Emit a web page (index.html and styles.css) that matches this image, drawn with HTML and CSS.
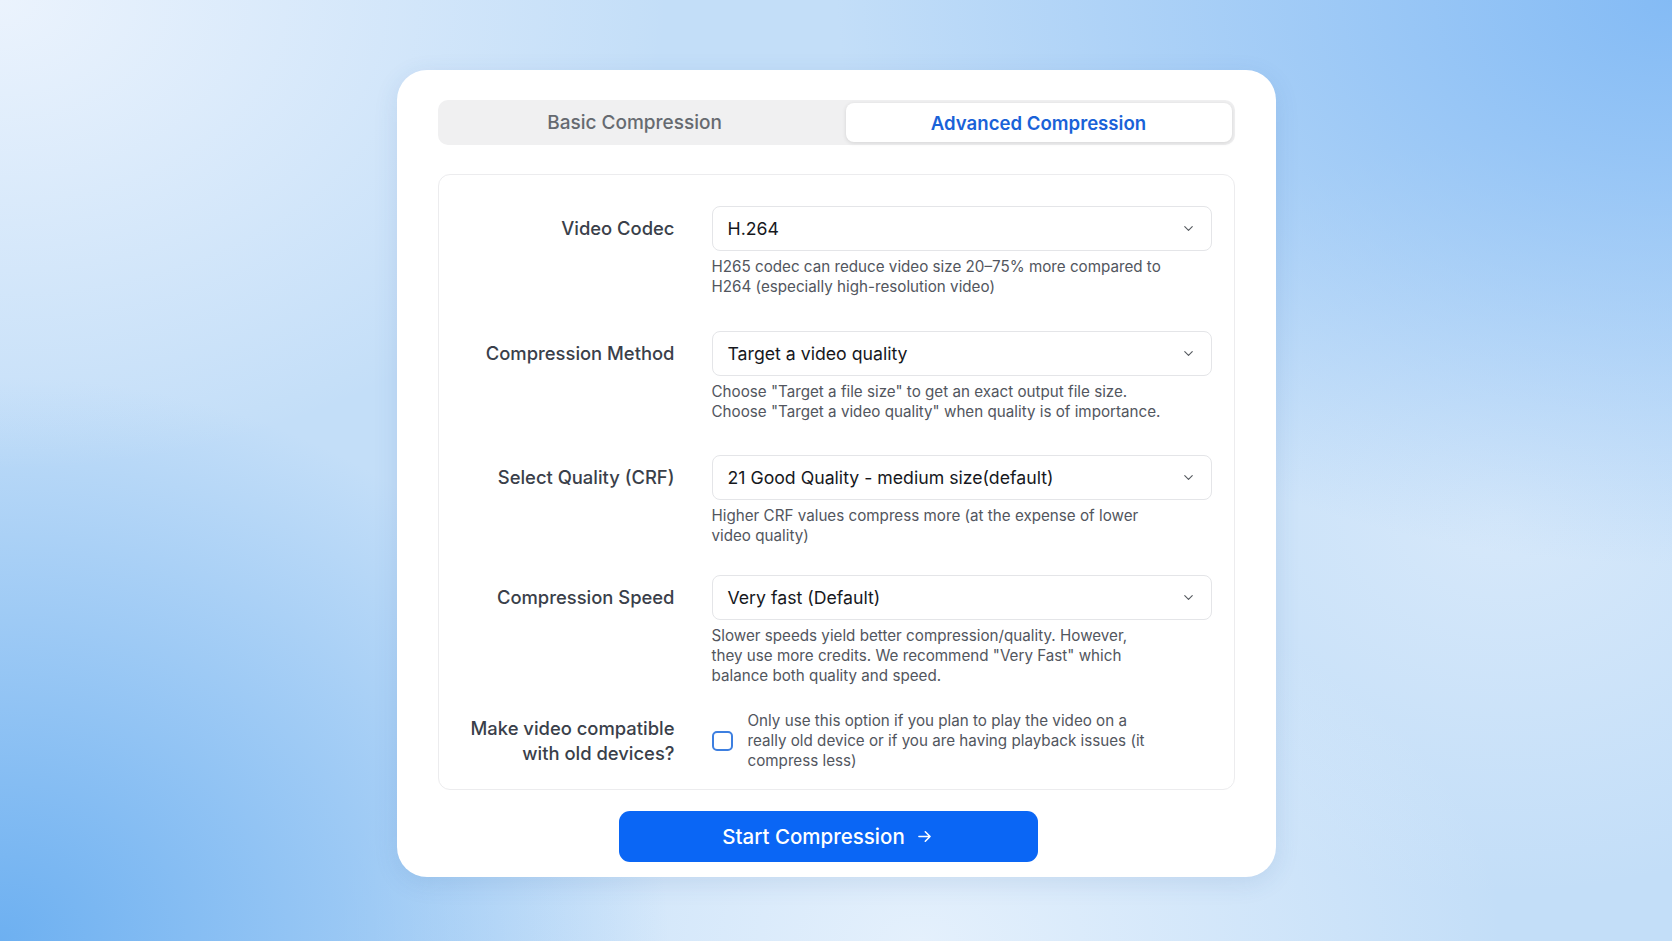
FILE: index.html
```html
<!DOCTYPE html>
<html lang="en">
<head>
    <meta charset="UTF-8">
    <meta name="viewport" content="width=device-width, initial-scale=1.0">
    <title>Video Compressor</title>
    <link rel="stylesheet" href="styles.css">
</head>
<body>
    <div class="compress-card">
        <div class="tab-bar">
            <button class="tab-btn">Basic Compression</button>
            <button class="tab-btn active">Advanced Compression</button>
        </div>

        <div class="options-panel">
            <div class="option-row">
                <label class="option-label">Video Codec</label>
                <div class="option-field">
                    <div class="select-box">
                        <span>H.264</span>
                        <svg class="chevron" viewBox="0 0 24 24" width="15" height="15"><path d="M6 9l6 6 6-6" fill="none" stroke="currentColor" stroke-width="1.8" stroke-linecap="round" stroke-linejoin="round"/></svg>
                    </div>
                    <p class="help-text">H265 codec can reduce video size 20–75% more compared to H264 (especially high-resolution video)</p>
                </div>
            </div>

            <div class="option-row row-method">
                <label class="option-label">Compression Method</label>
                <div class="option-field">
                    <div class="select-box">
                        <span>Target a video quality</span>
                        <svg class="chevron" viewBox="0 0 24 24" width="15" height="15"><path d="M6 9l6 6 6-6" fill="none" stroke="currentColor" stroke-width="1.8" stroke-linecap="round" stroke-linejoin="round"/></svg>
                    </div>
                    <p class="help-text">Choose "Target a file size" to get an exact output file size. Choose "Target a video quality" when quality is of importance.</p>
                </div>
            </div>

            <div class="option-row row-quality">
                <label class="option-label">Select Quality (CRF)</label>
                <div class="option-field">
                    <div class="select-box">
                        <span>21 Good Quality - medium size(default)</span>
                        <svg class="chevron" viewBox="0 0 24 24" width="15" height="15"><path d="M6 9l6 6 6-6" fill="none" stroke="currentColor" stroke-width="1.8" stroke-linecap="round" stroke-linejoin="round"/></svg>
                    </div>
                    <p class="help-text">Higher CRF values compress more (at the expense of lower video quality)</p>
                </div>
            </div>

            <div class="option-row row-speed">
                <label class="option-label">Compression Speed</label>
                <div class="option-field">
                    <div class="select-box">
                        <span>Very fast (Default)</span>
                        <svg class="chevron" viewBox="0 0 24 24" width="15" height="15"><path d="M6 9l6 6 6-6" fill="none" stroke="currentColor" stroke-width="1.8" stroke-linecap="round" stroke-linejoin="round"/></svg>
                    </div>
                    <p class="help-text">Slower speeds yield better compression/quality. However,<br>they use more credits. We recommend "Very Fast" which balance both quality and speed.</p>
                </div>
            </div>

            <div class="option-row check-row">
                <label class="option-label two-line">Make video compatible<br>with old devices?</label>
                <div class="check-field">
                    <span class="check-box"></span>
                    <p class="check-text">Only use this option if you plan to play the video on a really old device or if you are having playback issues (it compress less)</p>
                </div>
            </div>
        </div>

        <button class="start-btn">
            Start Compression
            <svg viewBox="0 0 24 24" width="19" height="19"><path d="M5 12h14M13 6l6 6-6 6" fill="none" stroke="currentColor" stroke-width="2" stroke-linecap="round" stroke-linejoin="round"/></svg>
        </button>
    </div>
</body>
</html>
```

FILE: styles.css
```css
body {
    margin: 0;
    min-height: 941px;
    font-family: Inter, "Noto Sans", Arial, sans-serif;
    background-color: #c3def8;
    background-image:
        radial-gradient(ellipse 40% 50% at 0% 0%, #ebf3fd 0%, rgba(235, 243, 253, 0) 100%),
        radial-gradient(ellipse 50% 60% at 100% 0%, #84bbf5 0%, rgba(132, 187, 245, 0) 100%),
        radial-gradient(ellipse 40% 60% at 0% 100%, #6db0f1 0%, rgba(109, 176, 241, 0) 100%),
        radial-gradient(ellipse 35% 40% at 55% 100%, #e4f0fc 0%, rgba(228, 240, 252, 0) 100%),
        radial-gradient(ellipse 30% 40% at 90% 55%, #d6e8fa 0%, rgba(214, 232, 250, 0) 100%);
    overflow: hidden;
}

.compress-card {
    width: 879px;
    box-sizing: border-box;
    margin: 70px auto 0;
    padding: 30px 41px 15px;
    background-color: #ffffff;
    border-radius: 30px;
    box-shadow: 0 6px 24px rgba(40, 90, 160, 0.12);
}

/* tabs */
.tab-bar {
    display: grid;
    grid-template-columns: 1fr 386px;
    gap: 17px;
    height: 45px;
    box-sizing: border-box;
    padding: 3px;
    background-color: #f0f0f1;
    border-radius: 10px;
}

.tab-btn {
    border: none;
    background: transparent;
    font-family: inherit;
    font-size: 19px;
    font-weight: 500;
    color: #666a70;
    border-radius: 8px;
    cursor: pointer;
}

.tab-btn.active {
    background-color: #ffffff;
    color: #1a62d8;
    font-size: 18.6px;
    font-weight: 600;
    box-shadow: 0 1px 4px rgba(0, 0, 0, 0.12);
}

/* options */
.options-panel {
    margin-top: 29px;
    padding: 31px 21px 18px 0;
    border: 1px solid #ececee;
    border-radius: 12px;
}

.option-row {
    display: grid;
    grid-template-columns: 236px 500px;
    column-gap: 37px;
    margin-bottom: 34px;
}

.option-row.row-method {
    margin-bottom: 33px;
}

.option-row.row-quality {
    margin-bottom: 29px;
}

.option-row.row-speed {
    margin-bottom: 25px;
}

.option-row:last-child {
    margin-bottom: 0;
}

.option-label {
    text-align: right;
    font-size: 18.4px;
    font-weight: 500;
    color: #3a3f4a;
    line-height: 45px;
}

.option-label.two-line {
    line-height: 25px;
}

.select-box {
    height: 45px;
    box-sizing: border-box;
    display: flex;
    align-items: center;
    justify-content: space-between;
    padding: 0 15px 0 15px;
    border: 1px solid #e4e5e8;
    border-radius: 8px;
    font-size: 17.7px;
    color: #16181d;
}

.chevron {
    color: #55595f;
}

.help-text {
    margin: 6px 0 0;
    max-width: 452px;
    font-size: 15.2px;
    line-height: 20px;
    color: #52565e;
}

.check-row {
    align-items: center;
}

.check-field {
    display: flex;
    align-items: center;
    gap: 15px;
}

.check-box {
    flex: none;
    width: 17px;
    height: 16px;
    border: 2px solid #3d7fe0;
    border-radius: 5px;
}

.check-text {
    margin: 0;
    max-width: 400px;
    font-size: 15.2px;
    line-height: 20px;
    color: #52565e;
}

/* submit */
.start-btn {
    display: flex;
    align-items: center;
    justify-content: center;
    gap: 10px;
    width: 419px;
    height: 51px;
    margin: 21px 0 0 181px;
    border: none;
    border-radius: 11px;
    background-color: #0a66f5;
    color: #ffffff;
    font-family: inherit;
    font-size: 20.5px;
    font-weight: 500;
    cursor: pointer;
}
```
